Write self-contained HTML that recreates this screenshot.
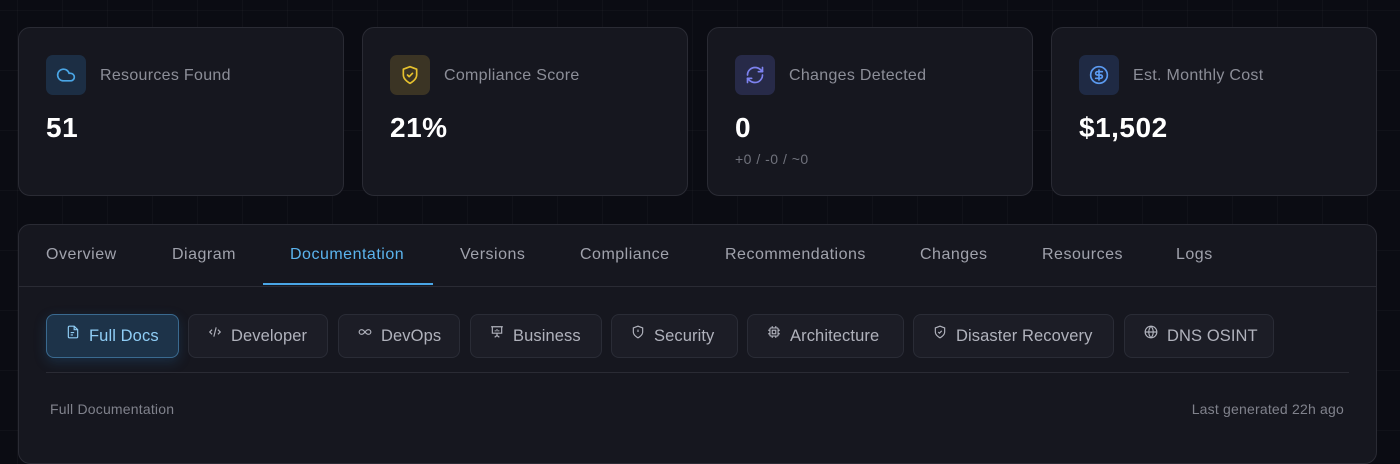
<!DOCTYPE html>
<html><head><meta charset="utf-8"><style>
*{box-sizing:border-box;margin:0;padding:0}
body{width:1400px;height:451px;overflow:hidden;background:#0b0c13;font-family:"Liberation Sans",sans-serif;position:relative;
background-image:linear-gradient(90deg,rgba(255,255,255,0.025) 1px,transparent 1px),linear-gradient(0deg,rgba(255,255,255,0.025) 1px,transparent 1px);background-size:45px 60px;background-position:17px 11px}
.card{position:absolute;top:27px;width:326px;height:169px;background:#16171f;border:1px solid #2a2b34;border-radius:12px}
.ib{position:absolute;left:27px;top:27px;width:40px;height:40px;border-radius:7px;display:flex;align-items:center;justify-content:center}
.lbl{position:absolute;left:81px;top:39px;font-size:16px;letter-spacing:.3px;color:#8c8e98}
.val{position:absolute;left:27px;top:84px;font-size:28px;letter-spacing:.5px;font-weight:bold;color:#fff}
.sub{position:absolute;left:27px;top:123px;font-size:14px;letter-spacing:.5px;color:#70727c}
.panel{position:absolute;left:18px;top:224px;width:1359px;height:240px;background:#16171f;border:1px solid #2a2b34;border-radius:12px}
.tab{position:absolute;top:21px;font-size:16px;letter-spacing:.5px;color:#a0a2ac}
.tabline{position:absolute;left:0;right:0;top:61px;height:1px;background:#2a2b34}
.btn{position:absolute;top:89px;height:44px;border:1px solid #2a2c36;background:#1c1d26;border-radius:8px;color:#b0b2bc;font-size:16.5px;letter-spacing:.1px;display:flex;align-items:center;padding-left:19px;gap:9px}
.btn svg{width:14px;height:14px;margin-top:-8px}
.ft{position:absolute;top:176px;font-size:14px;letter-spacing:.2px;color:#80828c}
</style></head><body>
<div class="card" style="left:18px"><div class="ib" style="background:#1c2e44"><svg width="20" height="20" viewBox="0 0 24 24" fill="none" stroke="#4aa6e6" stroke-width="2" stroke-linecap="round" stroke-linejoin="round"><path d="M17.5 19H9a7 7 0 1 1 6.7-9h1.8a4.5 4.5 0 1 1 0 9Z"/></svg></div><div class="lbl">Resources Found</div><div class="val">51</div></div>
<div class="card" style="left:362px"><div class="ib" style="background:#3b3424"><svg width="20" height="20" viewBox="0 0 24 24" fill="none" stroke="#e6c12e" stroke-width="2" stroke-linecap="round" stroke-linejoin="round"><path d="M12 22s8-4 8-10V5l-8-3-8 3v7c0 6 8 10 8 10z"/><path d="m9 12 2 2 4-4"/></svg></div><div class="lbl">Compliance Score</div><div class="val">21%</div></div>
<div class="card" style="left:707px"><div class="ib" style="background:#272a48"><svg width="20" height="20" viewBox="0 0 24 24" fill="none" stroke="#7d82f0" stroke-width="2" stroke-linecap="round" stroke-linejoin="round"><path d="M3 12a9 9 0 0 1 9-9 9.75 9.75 0 0 1 6.74 2.74L21 8"/><path d="M21 3v5h-5"/><path d="M21 12a9 9 0 0 1-9 9 9.75 9.75 0 0 1-6.74-2.74L3 16"/><path d="M8 16H3v5"/></svg></div><div class="lbl">Changes Detected</div><div class="val">0</div><div class="sub">+0 / -0 / ~0</div></div>
<div class="card" style="left:1051px"><div class="ib" style="background:#1f2a44"><svg width="20" height="20" viewBox="0 0 24 24" fill="none" stroke="#5b9af0" stroke-width="2" stroke-linecap="round" stroke-linejoin="round"><circle cx="12" cy="12" r="10"/><path d="M16 8h-6a2 2 0 1 0 0 4h4a2 2 0 1 1 0 4H8"/><path d="M12 18V6"/></svg></div><div class="lbl">Est. Monthly Cost</div><div class="val">$1,502</div></div>

<div class="panel">
<div class="tab" style="left:27px">Overview</div>
<div class="tab" style="left:153px">Diagram</div>
<div class="tab" style="left:271px;color:#5bb4ee">Documentation</div>
<div class="tab" style="left:441px">Versions</div>
<div class="tab" style="left:561px">Compliance</div>
<div class="tab" style="left:706px">Recommendations</div>
<div class="tab" style="left:901px">Changes</div>
<div class="tab" style="left:1023px">Resources</div>
<div class="tab" style="left:1157px">Logs</div>
<div class="tabline"></div>
<div style="position:absolute;left:244px;top:58px;width:170px;height:2px;background:#4aa6e6"></div>

<div class="btn" style="left:27px;width:133px;background:#1d3349;border-color:#3a6a90;color:#8fcdf5;box-shadow:0 4px 12px rgba(40,110,170,0.25)"><svg viewBox="0 0 24 24" fill="none" stroke="currentColor" stroke-width="2"><path d="M14 2H6a2 2 0 0 0-2 2v16a2 2 0 0 0 2 2h12a2 2 0 0 0 2-2V8z"/><path d="M14 2v6h6M8 13h6M8 17h4"/></svg>Full Docs</div>
<div class="btn" style="left:169px;width:140px"><svg viewBox="0 0 24 24" fill="none" stroke="currentColor" stroke-width="2"><path d="m7 8-4 4 4 4M17 8l4 4-4 4M14 4l-4 16"/></svg>Developer</div>
<div class="btn" style="left:319px;width:122px"><svg viewBox="0 0 24 24" fill="none" stroke="currentColor" stroke-width="2"><path d="M12 12c-2-2.7-4-4-6-4a4 4 0 0 0 0 8c2 0 4-1.3 6-4zm0 0c2 2.7 4 4 6 4a4 4 0 0 0 0-8c-2 0-4 1.3-6 4z"/></svg>DevOps</div>
<div class="btn" style="left:451px;width:132px"><svg viewBox="0 0 24 24" fill="none" stroke="currentColor" stroke-width="2"><path d="M2 3h20M4 3v11h16V3M12 14v4M8 21l4-3 4 3M9 11v-2M12 11V7M15 11V9"/></svg>Business</div>
<div class="btn" style="left:592px;width:127px"><svg viewBox="0 0 24 24" fill="none" stroke="currentColor" stroke-width="2"><path d="M12 22s8-4 8-10V5l-8-3-8 3v7c0 6 8 10 8 10z"/><path d="M12 8v4M12 16h.01"/></svg>Security</div>
<div class="btn" style="left:728px;width:157px"><svg viewBox="0 0 24 24" fill="none" stroke="currentColor" stroke-width="2"><rect x="5" y="5" width="14" height="14" rx="2"/><rect x="9" y="9" width="6" height="6"/><path d="M9 2v3M15 2v3M9 19v3M15 19v3M2 9h3M2 15h3M19 9h3M19 15h3"/></svg>Architecture</div>
<div class="btn" style="left:894px;width:201px"><svg viewBox="0 0 24 24" fill="none" stroke="currentColor" stroke-width="2"><path d="M12 22s8-4 8-10V5l-8-3-8 3v7c0 6 8 10 8 10z"/><path d="m9 12 2 2 4-4"/></svg>Disaster Recovery</div>
<div class="btn" style="left:1105px;width:150px"><svg viewBox="0 0 24 24" fill="none" stroke="currentColor" stroke-width="2"><circle cx="12" cy="12" r="10"/><path d="M2 12h20M12 2a15 15 0 0 1 0 20M12 2a15 15 0 0 0 0 20"/></svg>DNS OSINT</div>

<div style="position:absolute;left:27px;right:27px;top:147px;height:1px;background:#2a2b34"></div>
<div class="ft" style="left:31px">Full Documentation</div>
<div class="ft" style="right:32px">Last generated 22h ago</div>
</div>
</body></html>
